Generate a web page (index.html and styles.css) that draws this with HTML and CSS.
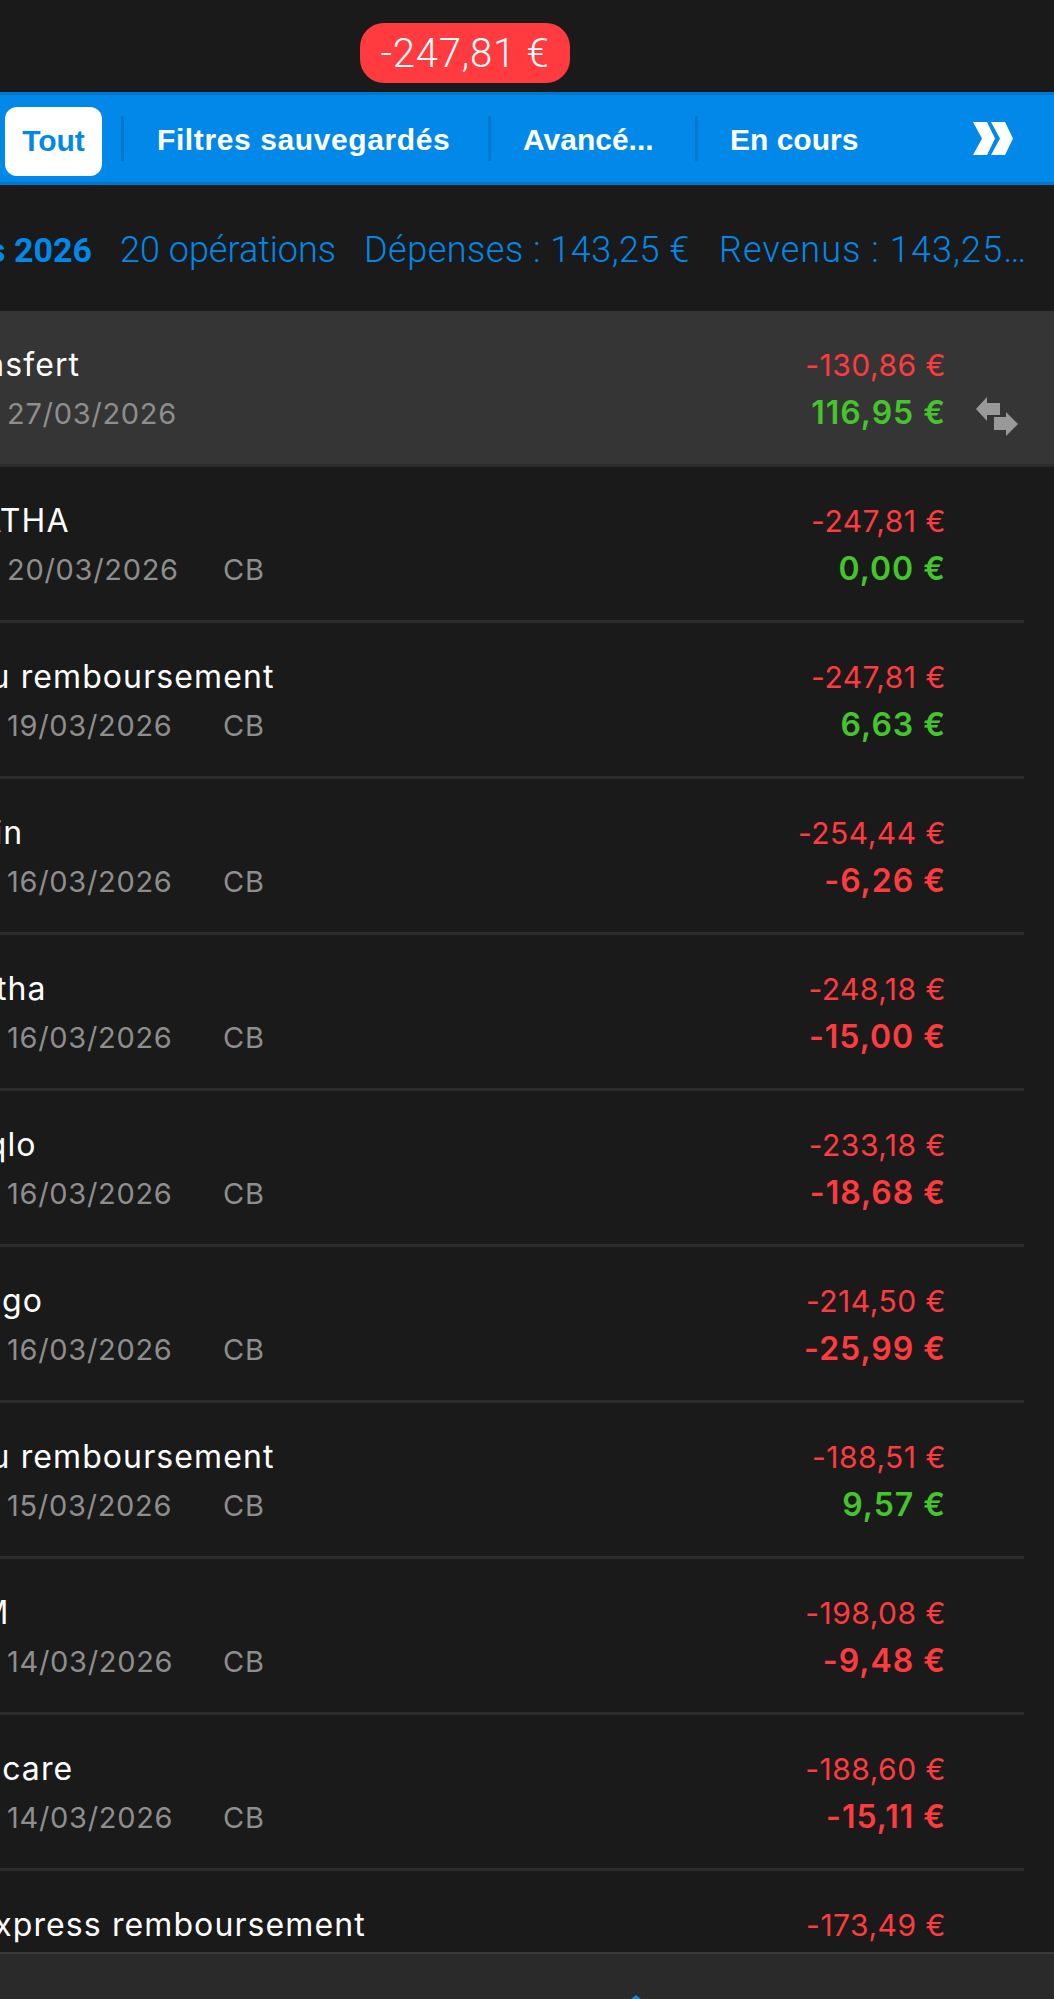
FILE: index.html
```html
<!DOCTYPE html>
<html lang="fr">
<head>
    <meta charset="UTF-8">
    <meta name="viewport" content="width=device-width, initial-scale=1.0">
    <title>Opérations</title>
    <link rel="stylesheet" href="styles.css">
</head>
<body>
    <div class="app">
        <div class="balance-bar">
            <span class="balance-pill">-247,81 €</span>
        </div>

        <nav class="tabs">
            <a class="tab tab-active">Tout</a>
            <span class="tab-sep sep-first"></span>
            <a class="tab tab-saved">Filtres sauvegardés</a>
            <span class="tab-sep"></span>
            <a class="tab tab-advanced">Avancé...</a>
            <span class="tab-sep"></span>
            <a class="tab tab-current">En cours</a>
            <svg class="tab-more" width="40" height="33" viewBox="0 0 40 33">
                <path d="M0 0H14L22 16.5L14 33H0L9 16.5Z M18 0H32L40 16.5L32 33H18L27 16.5Z" fill="#fff"/>
            </svg>
        </nav>

        <div class="summary">
            <span class="summary-month">Mars 2026</span>
            <span class="summary-count">20 opérations</span>
            <span class="summary-out">Dépenses : 143,25 €</span>
            <span class="summary-in">Revenus : 143,25…</span>
        </div>

        <main class="list">
            <div class="row row-selected">
                <div class="row-left">
                    <div class="name">Transfert</div>
                    <div class="meta"><span class="date">27/03/2026</span></div>
                </div>
                <div class="amounts">
                    <div class="balance">-130,86 €</div>
                    <div class="amount pos">116,95 €</div>
                </div>
                <svg class="row-icon" width="42" height="39" viewBox="0 0 42 39">
                    <path d="M0 12L11 0V6H24V18H11V24Z M18 20H30V15L42 27L30 39V33H18Z" fill="#999"/>
                </svg>
            </div>
            <div class="row">
                <div class="row-left">
                    <div class="name">AGATHA</div>
                    <div class="meta"><span class="date">20/03/2026</span><span class="kind">CB</span></div>
                </div>
                <div class="amounts">
                    <div class="balance">-247,81 €</div>
                    <div class="amount pos">0,00 €</div>
                </div>
            </div>
            <div class="row">
                <div class="row-left">
                    <div class="name">Miku remboursement</div>
                    <div class="meta"><span class="date">19/03/2026</span><span class="kind">CB</span></div>
                </div>
                <div class="amounts">
                    <div class="balance">-247,81 €</div>
                    <div class="amount pos">6,63 €</div>
                </div>
            </div>
            <div class="row">
                <div class="row-left">
                    <div class="name">Shein</div>
                    <div class="meta"><span class="date">16/03/2026</span><span class="kind">CB</span></div>
                </div>
                <div class="amounts">
                    <div class="balance">-254,44 €</div>
                    <div class="amount neg">-6,26 €</div>
                </div>
            </div>
            <div class="row">
                <div class="row-left">
                    <div class="name">Agatha</div>
                    <div class="meta"><span class="date">16/03/2026</span><span class="kind">CB</span></div>
                </div>
                <div class="amounts">
                    <div class="balance">-248,18 €</div>
                    <div class="amount neg">-15,00 €</div>
                </div>
            </div>
            <div class="row">
                <div class="row-left">
                    <div class="name">Uniqlo</div>
                    <div class="meta"><span class="date">16/03/2026</span><span class="kind">CB</span></div>
                </div>
                <div class="amounts">
                    <div class="balance">-233,18 €</div>
                    <div class="amount neg">-18,68 €</div>
                </div>
            </div>
            <div class="row">
                <div class="row-left">
                    <div class="name">Mango</div>
                    <div class="meta"><span class="date">16/03/2026</span><span class="kind">CB</span></div>
                </div>
                <div class="amounts">
                    <div class="balance">-214,50 €</div>
                    <div class="amount neg">-25,99 €</div>
                </div>
            </div>
            <div class="row">
                <div class="row-left">
                    <div class="name">Miku remboursement</div>
                    <div class="meta"><span class="date">15/03/2026</span><span class="kind">CB</span></div>
                </div>
                <div class="amounts">
                    <div class="balance">-188,51 €</div>
                    <div class="amount pos">9,57 €</div>
                </div>
            </div>
            <div class="row">
                <div class="row-left">
                    <div class="name">H&amp;M</div>
                    <div class="meta"><span class="date">14/03/2026</span><span class="kind">CB</span></div>
                </div>
                <div class="amounts">
                    <div class="balance">-198,08 €</div>
                    <div class="amount neg">-9,48 €</div>
                </div>
            </div>
            <div class="row">
                <div class="row-left">
                    <div class="name">Skincare</div>
                    <div class="meta"><span class="date">14/03/2026</span><span class="kind">CB</span></div>
                </div>
                <div class="amounts">
                    <div class="balance">-188,60 €</div>
                    <div class="amount neg">-15,11 €</div>
                </div>
            </div>
            <div class="row">
                <div class="row-left">
                    <div class="name">AliExpress remboursement</div>
                    <div class="meta"><span class="date">14/03/2026</span><span class="kind">CB</span></div>
                </div>
                <div class="amounts">
                    <div class="balance">-173,49 €</div>
                    <div class="amount pos">15,00 €</div>
                </div>
            </div>
        </main>

        <footer class="bottom-bar">
            <span class="bottom-tip"></span>
        </footer>
    </div>
</body>
</html>
```

FILE: styles.css
```css
html, body {
    margin: 0;
    background: #1a1a1a;
}

.app {
    width: 1054px;
    height: 1999px;
    display: flex;
    flex-direction: column;
    overflow: hidden;
    font-family: Inter, "Noto Sans", sans-serif;
    color: #fff;
}

/* top balance */
.balance-bar {
    height: 92px;
    flex: none;
    padding: 23px 0 0 360px;
    box-sizing: border-box;
}

.balance-pill {
    display: flex;
    align-items: center;
    justify-content: center;
    width: 210px;
    height: 60px;
    border-radius: 24px;
    background: #ff3b3f;
    font-family: Roboto, sans-serif;
    font-size: 40px;
    font-weight: 300;
    letter-spacing: 0.8px;
}

/* tabs */
.tabs {
    height: 93px;
    flex: none;
    box-sizing: border-box;
    display: flex;
    align-items: center;
    background: #0288e8;
    border-top: 3px solid #0277cf;
    border-bottom: 3px solid #0277cf;
    font-family: "Liberation Sans", sans-serif;
    font-size: 30px;
    font-weight: bold;
}

.tab {
    color: #fff;
    white-space: nowrap;
}

.tab-active {
    width: 97px;
    height: 69px;
    margin: 5px 0 0 5px;
    border-radius: 12px;
    background: #fff;
    color: #0288e8;
    display: flex;
    align-items: center;
    justify-content: center;
}

.tab-sep {
    width: 3px;
    height: 45px;
    background: #0277cf;
}

.sep-first {
    margin-left: 19px;
}

.tab-saved {
    width: 295px;
    margin: 2px 36px 0 33px;
    letter-spacing: 0.6px;
}

.tab-advanced {
    width: 137px;
    margin: 2px 35px 0 32px;
}

.tab-current {
    width: 131px;
    margin: 2px 0 0 32px;
}

.tab-more {
    margin-left: 112px;
}

/* month summary */
.summary {
    height: 126px;
    flex: none;
    box-sizing: border-box;
    padding-top: 3px;
    display: flex;
    align-items: center;
    font-family: Roboto, sans-serif;
    font-size: 36px;
    font-weight: 300;
    color: #0288e8;
    white-space: nowrap;
}

.summary-month {
    width: 92px;
    flex: none;
    display: flex;
    justify-content: flex-end;
    font-size: 34px;
    font-weight: bold;
}

.summary-count {
    margin-left: 28px;
    width: 213px;
}

.summary-out {
    margin-left: 31px;
    width: 326px;
    letter-spacing: 0.5px;
}

.summary-in {
    margin-left: 29px;
    letter-spacing: 1.1px;
}

/* operations */
.list {
    flex: 1;
    min-height: 0;
    overflow: hidden;
}

.row {
    height: 156px;
    box-sizing: border-box;
    display: flex;
    align-items: center;
    padding-right: 108px;
    position: relative;
}

.row::after {
    content: "";
    position: absolute;
    left: 0;
    right: 30px;
    bottom: 0;
    height: 3px;
    background: #2c2c2c;
}

.row-selected {
    background: #353535;
}

.row-selected::after {
    right: 0;
}

.row-left {
    flex: 1;
    min-width: 0;
    padding-left: 7px;
}

.name {
    margin-left: -74px;
    font-size: 32px;
    letter-spacing: 1.1px;
    line-height: 48px;
    white-space: nowrap;
}

.meta {
    display: flex;
    padding-top: 1px;
    font-size: 29px;
    letter-spacing: 0.7px;
    line-height: 48px;
    color: #8e8e8e;
}

.date {
    width: 216px;
}

.amounts {
    text-align: right;
    white-space: nowrap;
}

.balance {
    font-size: 30px;
    letter-spacing: 0.5px;
    line-height: 48px;
    color: #ff3b3f;
}

.amount {
    font-size: 32px;
    font-weight: 600;
    letter-spacing: 1px;
    line-height: 48px;
}

.pos {
    color: #44c52c;
}

.neg {
    color: #ff3b3f;
}

.row-icon {
    position: absolute;
    left: 976px;
    top: 86px;
}

/* bottom bar */
.bottom-bar {
    height: 47px;
    flex: none;
    box-sizing: border-box;
    border-top: 2px solid #3a3a3a;
    background: #2a2a2a;
    position: relative;
}

.bottom-tip {
    position: absolute;
    left: 631px;
    bottom: 0;
    border-left: 5px solid transparent;
    border-right: 5px solid transparent;
    border-bottom: 4px solid #0288e8;
}
```
